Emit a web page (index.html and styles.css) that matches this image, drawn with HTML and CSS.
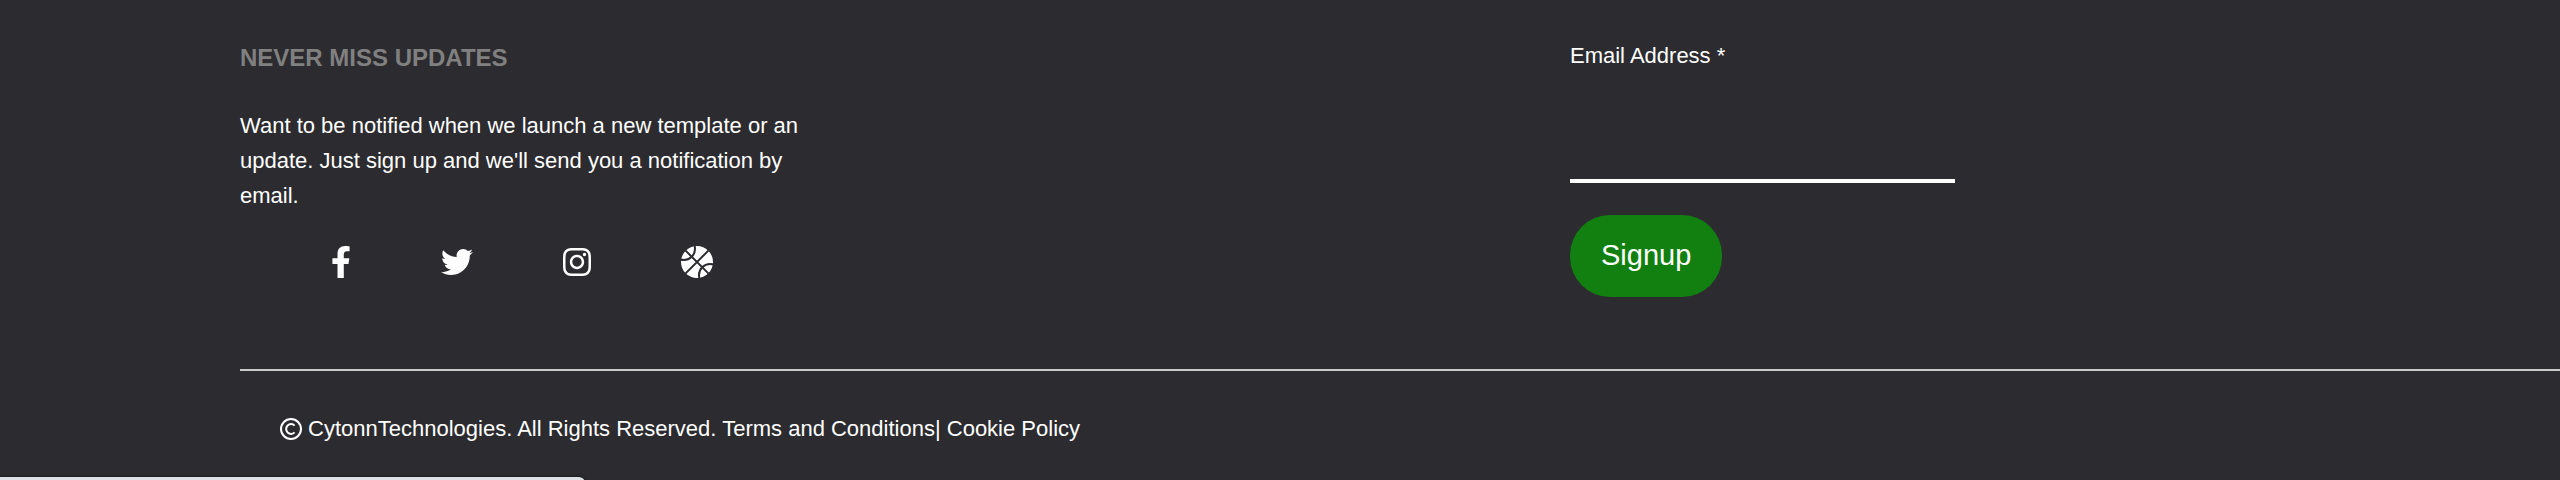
FILE: index.html
```html
<!DOCTYPE html>
<html lang="en">
<head>
<meta charset="utf-8">
<meta name="viewport" content="width=device-width, initial-scale=1">
<title>Cytonn Technologies</title>
<link rel="stylesheet" href="styles.css">
</head>
<body>
<footer class="footer">
  <div class="footer-main">
    <section class="updates">
      <h2 class="updates-title">NEVER MISS UPDATES</h2>
      <p class="updates-text">Want to be notified when we launch a new template or an update. Just sign up and we'll send you a notification by email.</p>
      <nav class="social" aria-label="Social media">
        <a href="#" aria-label="Facebook"><svg class="icon" viewBox="0 0 320 512"><path d="M279.14 288l14.22-92.66h-88.91v-60.13c0-25.35 12.42-50.06 52.24-50.06h40.42V6.26S260.43 0 225.36 0c-73.22 0-121.08 44.38-121.08 124.72v70.62H22.89V288h81.39v224h100.17V288z"/></svg></a>
        <a href="#" aria-label="Twitter"><svg class="icon" viewBox="0 0 512 512"><path d="M459.37 151.716c.325 4.548.325 9.097.325 13.645 0 138.72-105.583 298.558-298.558 298.558-59.452 0-114.68-17.219-161.137-47.106 8.447.974 16.568 1.299 25.34 1.299 49.055 0 94.213-16.568 130.274-44.832-46.132-.975-84.792-31.188-98.112-72.772 6.498.974 12.995 1.624 19.818 1.624 9.421 0 18.843-1.3 27.614-3.573-48.081-9.747-84.143-51.98-84.143-102.985v-1.299c13.969 7.797 30.214 12.67 47.431 13.319-28.264-18.843-46.781-51.005-46.781-87.391 0-19.492 5.197-37.36 14.294-52.954 51.655 63.675 129.3 105.258 216.365 109.807-1.624-7.797-2.599-15.918-2.599-24.04 0-57.828 46.782-104.934 104.934-104.934 30.213 0 57.502 12.67 76.67 33.137 23.715-4.548 46.456-13.32 66.599-25.34-7.798 24.366-24.366 44.833-46.132 57.827 21.117-2.273 41.584-8.122 60.426-16.243-14.292 20.791-32.161 39.308-52.628 54.253z"/></svg></a>
        <a href="#" aria-label="Instagram"><svg class="icon" viewBox="0 0 448 512"><path d="M224.1 141c-63.6 0-114.9 51.3-114.9 114.9s51.3 114.9 114.9 114.9S339 319.5 339 255.9 287.7 141 224.1 141zm0 189.6c-41.1 0-74.7-33.5-74.7-74.7s33.5-74.7 74.7-74.7 74.7 33.5 74.7 74.7-33.6 74.7-74.7 74.7zm146.4-194.3c0 14.9-12 26.8-26.8 26.8-14.9 0-26.8-12-26.8-26.8s12-26.8 26.8-26.8 26.8 12 26.8 26.8zm76.1 27.2c-1.7-35.9-9.9-67.7-36.2-93.9-26.2-26.2-58-34.4-93.9-36.2-37-2.1-147.9-2.1-184.9 0-35.8 1.7-67.6 9.9-93.9 36.1s-34.4 58-36.2 93.9c-2.1 37-2.1 147.9 0 184.9 1.7 35.9 9.9 67.7 36.2 93.9s58 34.4 93.9 36.2c37 2.1 147.9 2.1 184.9 0 35.9-1.7 67.7-9.9 93.9-36.2 26.2-26.2 34.4-58 36.2-93.9 2.1-37 2.1-147.8 0-184.8zM398.8 388c-7.8 19.6-22.9 34.7-42.6 42.6-29.5 11.7-99.5 9-132.1 9s-102.7 2.6-132.1-9c-19.6-7.8-34.7-22.9-42.6-42.6-11.7-29.5-9-99.5-9-132.1s-2.6-102.7 9-132.1c7.8-19.6 22.9-34.7 42.6-42.6 29.5-11.7 99.5-9 132.1-9s102.7-2.6 132.1 9c19.6 7.8 34.7 22.9 42.6 42.6 11.7 29.5 9 99.5 9 132.1s2.7 102.7-9 132.1z"/></svg></a>
        <a href="#" aria-label="Dribbble"><svg class="icon" viewBox="0 0 512 512"><circle cx="256" cy="256" r="256"/><path class="seam" d="M70 70L442 442M442 70L70 442"/><circle class="seam" cx="48" cy="48" r="176"/><circle class="seam" cx="464" cy="464" r="176"/></svg></a>
      </nav>
    </section>
    <form class="signup">
      <label class="signup-label" for="email">Email Address *</label>
      <input class="signup-input" id="email" type="email" required>
      <button class="signup-button" type="submit">Signup</button>
    </form>
  </div>
  <div class="legal">
    <svg class="legal-icon" viewBox="0 0 22 22" aria-hidden="true"><circle cx="11" cy="11" r="10"/><path d="M14.6 7.6A4.9 4.9 0 1 0 14.6 14.4"/></svg>
    <p class="legal-text">CytonnTechnologies. All Rights Reserved. <a href="#">Terms and Conditions</a>| <a href="#">Cookie Policy</a></p>
  </div>
</footer>
<div class="status-bar"></div>
</body>
</html>
```
FILE: styles.css
```css
* {
  box-sizing: border-box;
}

body {
  margin: 0;
  min-height: 100vh;
  background: #2c2b2f;
  color: #fff;
  font-family: "Liberation Sans", Arial, sans-serif;
  font-size: 22px;
  line-height: 35px;
  overflow-x: hidden;
}

a {
  color: inherit;
  text-decoration: none;
}

.footer {
  padding: 38px 0 0 240px;
}

.footer-main {
  display: grid;
  grid-template-columns: 4fr 3fr;
  column-gap: 10px;
  padding-bottom: 72px;
  border-bottom: 2px solid #c8c8c8;
}

.updates-title {
  margin: 0 0 30px;
  color: #808080;
  font-size: 24px;
  line-height: 40px;
}

.updates-text {
  max-width: 580px;
  margin: 0;
}

.social {
  display: flex;
  gap: 90px;
  padding: 33px 0 0 91px;
}

.social a {
  display: flex;
}

.icon {
  height: 32px;
  fill: #fff;
}

.seam {
  fill: none;
  stroke: #2c2b2f;
  stroke-width: 32;
}

.signup {
  display: flex;
  flex-direction: column;
  align-items: flex-start;
}

.signup-label {
  margin-bottom: 33px;
}

.signup-input {
  width: 385px;
  max-width: 100%;
  height: 77px;
  padding: 10px;
  border: 0;
  border-bottom: 4px solid #fff;
  background: transparent;
  color: #fff;
  font: inherit;
  outline: none;
}

.signup-button {
  margin-top: 32px;
  padding: 19px 31px 21px;
  border: 0;
  border-radius: 40px;
  background: #118011;
  color: #fff;
  font-family: inherit;
  font-size: 29px;
  line-height: 42px;
}

.legal {
  display: flex;
  align-items: center;
  gap: 6px;
  padding: 40px 0 16px 40px;
}

.legal-icon {
  width: 22px;
  height: 22px;
  fill: none;
  stroke: #fff;
  stroke-width: 2;
}

.legal-text {
  margin: 0;
}

.status-bar {
  position: fixed;
  left: 0;
  bottom: 0;
  width: 584px;
  height: 3px;
  border-top-right-radius: 6px 3px;
  background: #dee1e6;
  box-shadow: 0 0 3px #111;
}
```
